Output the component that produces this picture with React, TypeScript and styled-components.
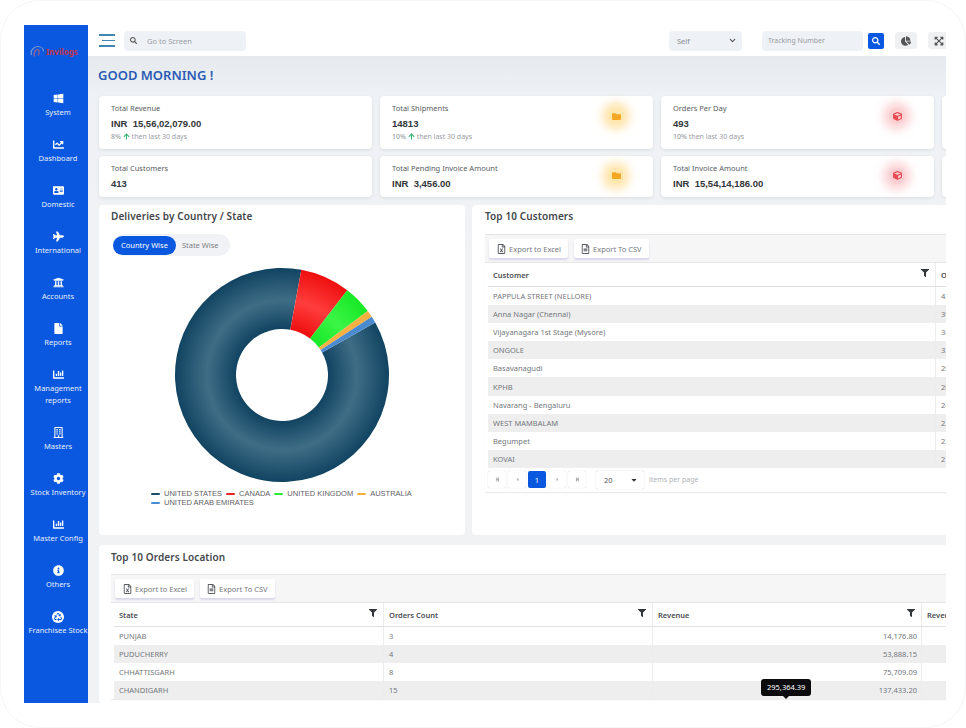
import React from 'react';
import styled, { createGlobalStyle } from 'styled-components';
import {
  FaWindows, FaChartLine, FaAddressCard, FaPlane, FaUniversity, FaFile, FaChartBar,
  FaRegBuilding, FaCog, FaInfoCircle, FaRecycle, FaSearch, FaChartPie, FaFilter,
  FaRegFileExcel, FaRegFileAlt, FaArrowUp, FaCube, FaFolder, FaExpandArrowsAlt,
  FaStepBackward, FaStepForward, FaCaretLeft, FaCaretRight, FaCaretDown,
} from 'react-icons/fa';
import { FiChevronDown } from 'react-icons/fi';

const GlobalStyle = createGlobalStyle`
  html, body {
    margin: 0;
    padding: 0;
    background: #ffffff;
  }
  * {
    box-sizing: border-box;
  }
  body {
    font-family: 'Noto Sans', Arial, sans-serif;
  }
`;

const navItems = [
  { icon: <FaWindows />, label: ['System'] },
  { icon: <FaChartLine />, label: ['Dashboard'] },
  { icon: <FaAddressCard />, label: ['Domestic'] },
  { icon: <FaPlane />, label: ['International'] },
  { icon: <FaUniversity />, label: ['Accounts'] },
  { icon: <FaFile />, label: ['Reports'] },
  { icon: <FaChartBar />, label: ['Management', 'reports'] },
  { icon: <FaRegBuilding />, label: ['Masters'] },
  { icon: <FaCog />, label: ['Stock Inventory'] },
  { icon: <FaChartBar />, label: ['Master Config'] },
  { icon: <FaInfoCircle />, label: ['Others'] },
  { icon: <RecycleIcon />, label: ['Franchisee Stock'] },
];

const customers = [
  ['PAPPULA STREET (NELLORE)', '42'],
  ['Anna Nagar (Chennai)', '39'],
  ['Vijayanagara 1st Stage (Mysore)', '34'],
  ['ONGOLE', '33'],
  ['Basavanagudi', '29'],
  ['KPHB', '26'],
  ['Navarang - Bengaluru', '24'],
  ['WEST MAMBALAM', '23'],
  ['Begumpet', '23'],
  ['KOVAI', '21'],
];

const locations = [
  ['PUNJAB', '3', '14,176.80'],
  ['PUDUCHERRY', '4', '53,888.15'],
  ['CHHATTISGARH', '8', '75,709.09'],
  ['CHANDIGARH', '15', '137,433.20'],
];

const legend = [
  { color: '#1d4e68', name: 'UNITED STATES' },
  { color: '#ee2222', name: 'CANADA' },
  { color: '#2ee83a', name: 'UNITED KINGDOM' },
  { color: '#f5b042', name: 'AUSTRALIA' },
  { color: '#4a8bd0', name: 'UNITED ARAB EMIRATES' },
];

const CX = 120;
const CY = 110;
const R1 = 107;
const R0 = 46;

function slicePath(from: number, to: number) {
  const point = (r: number, deg: number) => {
    const a = (deg * Math.PI) / 180;
    return `${(CX + r * Math.sin(a)).toFixed(2)} ${(CY - r * Math.cos(a)).toFixed(2)}`;
  };
  const large = to - from > 180 ? 1 : 0;
  return `M${point(R1, from)} A${R1} ${R1} 0 ${large} 1 ${point(R1, to)} L${point(R0, to)} A${R0} ${R0} 0 ${large} 0 ${point(R0, from)} Z`;
}

const slices = [
  { from: 60.6, to: 370.4, fill: 'url(#gradUs)' },
  { from: 10.4, to: 37.6, fill: 'url(#gradCa)' },
  { from: 37.6, to: 53.3, fill: 'url(#gradUk)' },
  { from: 53.3, to: 57, fill: '#f5b042' },
  { from: 57, to: 60.6, fill: '#4a8bd0' },
];

function ringGradient(id: string, edge: string, mid: string) {
  return (
    <radialGradient id={id} gradientUnits="userSpaceOnUse" cx={CX} cy={CY} r={R1}>
      <stop offset="0.43" stopColor={edge} />
      <stop offset="0.7" stopColor={mid} />
      <stop offset="1" stopColor={edge} />
    </radialGradient>
  );
}

const Donut = () => (
  <svg width="240" height="220" viewBox="0 0 240 220">
    <defs>
      {ringGradient('gradUs', '#114461', '#3f6d86')}
      {ringGradient('gradCa', '#ee0f0f', '#ff3d3d')}
      {ringGradient('gradUk', '#17e826', '#3bf546')}
    </defs>
    {slices.map((s, i) => (
      <path key={i} d={slicePath(s.from, s.to)} fill={s.fill} />
    ))}
  </svg>
);

const Logo = () => (
  <LogoWrap>
    <svg width="15" height="13" viewBox="0 0 15 13" fill="none" stroke="#7f97c8" strokeWidth="1.2">
      <path d="M1.5 10C0 5 4 1.5 8 1.5c3 0 5.5 2 5.5 5" />
      <path d="M4.5 11.5c-1-4 1-7 3-7 2 0 2 3 .8 6" stroke="#a8617f" />
    </svg>
    <LogoText>Invilogs</LogoText>
  </LogoWrap>
);

function RecycleIcon() {
  return (
    <RecycleBadge>
      <FaRecycle />
    </RecycleBadge>
  );
}

const Exports = () => (
  <Toolbar>
    <ExportButton $pad="8px">
      <FaRegFileExcel />
      Export to Excel
    </ExportButton>
    <ExportButton $pad="7px">
      <FaRegFileAlt />
      Export To CSV
    </ExportButton>
  </Toolbar>
);

const App: React.FC = () => {
  return (
    <Screen>
      <GlobalStyle />
      <Frame>
        <Sidebar>
          <Logo />
          <Nav>
            {navItems.map((item, i) => (
              <NavItem key={i}>
                <NavIcon>{item.icon}</NavIcon>
                {item.label.map((line) => (
                  <NavLabel key={line}>{line}</NavLabel>
                ))}
              </NavItem>
            ))}
          </Nav>
        </Sidebar>

        <Content>
          <TopBar>
            <Burger>
              <span />
              <span />
              <span />
            </Burger>
            <SearchBox>
              <FaSearch size={7} color="#555" />
              <span>Go to Screen</span>
            </SearchBox>
            <TopRight>
              <SelectBox>
                <span>Self</span>
                <FiChevronDown size={9} color="#555" strokeWidth={3} />
              </SelectBox>
              <TrackingBox>Tracking Number</TrackingBox>
              <BlueButton>
                <FaSearch size={8} color="#fff" />
              </BlueButton>
              <GreyButton>
                <FaChartPie size={10} color="#555" />
              </GreyButton>
              <GreyButton>
                <FaExpandArrowsAlt size={10} color="#555" />
              </GreyButton>
            </TopRight>
          </TopBar>

          <Main>
            <Greeting>GOOD MORNING !</Greeting>
            <CardGrid>
              <StatCard>
                <div>
                  <StatLabel>Total Revenue</StatLabel>
                  <StatValue>INR&nbsp; 15,56,02,079.00</StatValue>
                  <StatNote>
                    <b>8%</b> <FaArrowUp size={7} color="#2fb36f" /> then last 30 days
                  </StatNote>
                </div>
              </StatCard>
              <StatCard>
                <div>
                  <StatLabel>Total Shipments</StatLabel>
                  <StatValue>14813</StatValue>
                  <StatNote>
                    <b>10%</b> <FaArrowUp size={7} color="#2fb36f" /> then last 30 days
                  </StatNote>
                </div>
                <Glow $tone="orange" $raised>
                  <FaFolder />
                </Glow>
              </StatCard>
              <StatCard>
                <div>
                  <StatLabel>Orders Per Day</StatLabel>
                  <StatValue>493</StatValue>
                  <StatNote>
                    <b>10%</b> then last 30 days
                  </StatNote>
                </div>
                <Glow $tone="red" $raised>
                  <FaCube />
                </Glow>
              </StatCard>
              <StatCard />
              <StatCard $short>
                <div>
                  <StatLabel>Total Customers</StatLabel>
                  <StatValue>413</StatValue>
                </div>
              </StatCard>
              <StatCard $short>
                <div>
                  <StatLabel>Total Pending Invoice Amount</StatLabel>
                  <StatValue>INR&nbsp; 3,456.00</StatValue>
                </div>
                <Glow $tone="orange">
                  <FaFolder />
                </Glow>
              </StatCard>
              <StatCard $short>
                <div>
                  <StatLabel>Total Invoice Amount</StatLabel>
                  <StatValue>INR&nbsp; 15,54,14,186.00</StatValue>
                </div>
                <Glow $tone="red">
                  <FaCube />
                </Glow>
              </StatCard>
              <StatCard $short />
            </CardGrid>

            <PanelRow>
              <ChartPanel>
                <PanelTitle>Deliveries by Country / State</PanelTitle>
                <Toggle>
                  <ToggleOption $active>Country Wise</ToggleOption>
                  <ToggleOption>State Wise</ToggleOption>
                </Toggle>
                <ChartArea>
                  <Donut />
                </ChartArea>
                <Legend>
                  {legend.map((l) => (
                    <LegendItem key={l.name}>
                      <LegendDash $color={l.color} />
                      {l.name}
                    </LegendItem>
                  ))}
                </Legend>
              </ChartPanel>

              <TablePanel>
                <PanelTitle>Top 10 Customers</PanelTitle>
                <GridBox>
                  <Exports />
                  <HeaderRow $cols="448px 60px">
                    <HeaderCell>
                      Customer
                      <FilterIcon />
                    </HeaderCell>
                    <HeaderCell>Orders</HeaderCell>
                  </HeaderRow>
                  {customers.map((row, i) => (
                    <DataRow key={row[0]} $cols="448px 60px" $alt={i % 2 === 1}>
                      <DataCell>{row[0]}</DataCell>
                      <DataCell>{row[1]}</DataCell>
                    </DataRow>
                  ))}
                  <Pager>
                    <PageButton><FaStepBackward /></PageButton>
                    <PageButton><FaCaretLeft /></PageButton>
                    <PageButton $active>1</PageButton>
                    <PageButton><FaCaretRight /></PageButton>
                    <PageButton><FaStepForward /></PageButton>
                    <PageSize>
                      20
                      <FaCaretDown size={8} color="#333" />
                    </PageSize>
                    <PageNote>items per page</PageNote>
                  </Pager>
                </GridBox>
              </TablePanel>
            </PanelRow>

            <BottomPanel>
              <PanelTitle>Top 10 Orders Location</PanelTitle>
              <GridBox $tight>
                <Exports />
                <HeaderRow $cols="270px 269px 269px 60px">
                  <HeaderCell>
                    State
                    <FilterIcon />
                  </HeaderCell>
                  <HeaderCell>
                    Orders Count
                    <FilterIcon />
                  </HeaderCell>
                  <HeaderCell>
                    Revenue
                    <FilterIcon />
                  </HeaderCell>
                  <HeaderCell>Revenue</HeaderCell>
                </HeaderRow>
                {locations.map((row, i) => (
                  <DataRow key={row[0]} $cols="270px 269px 269px 60px" $alt={i % 2 === 1}>
                    <DataCell>{row[0]}</DataCell>
                    <DataCell>{row[1]}</DataCell>
                    <DataCell $right>{row[2]}</DataCell>
                    <DataCell />
                  </DataRow>
                ))}
              </GridBox>
              <ValueTip>295,364.39</ValueTip>
            </BottomPanel>
          </Main>
        </Content>
      </Frame>
    </Screen>
  );
};

export default App;

const Screen = styled.div`
  width: 966px;
  height: 728px;
  padding: 24px 19px 24px 23px;
  border: 1px solid #f4f5f7;
  border-radius: 40px;
  background: #ffffff;
  overflow: hidden;
`;

const Frame = styled.div`
  display: flex;
  height: 678px;
  overflow: hidden;
`;

const Sidebar = styled.aside`
  flex: 0 0 64px;
  background: #0a58e0;
  overflow: hidden;
`;

const LogoWrap = styled.div`
  display: flex;
  align-items: center;
  gap: 1px;
  height: 18px;
  margin-top: 17px;
  padding-left: 6px;
`;

const LogoText = styled.span`
  font-size: 8px;
  font-weight: 700;
  color: #c8334a;
`;

const Nav = styled.nav`
  display: flex;
  flex-direction: column;
  gap: 20px;
  margin-top: 32px;
  padding-left: 4px;
`;

const NavItem = styled.div`
  display: flex;
  flex-direction: column;
  align-items: center;
  color: #ffffff;
`;

const NavIcon = styled.div`
  display: flex;
  align-items: center;
  justify-content: center;
  height: 13px;
  margin-bottom: 1px;
  font-size: 11px;
`;

const RecycleBadge = styled.span`
  display: flex;
  align-items: center;
  justify-content: center;
  width: 12px;
  height: 12px;
  border-radius: 50%;
  background: #ffffff;
  font-size: 8px;
  color: #0a58e0;
`;

const NavLabel = styled.div`
  font-size: 7.5px;
  line-height: 12px;
  white-space: nowrap;
  color: #e6eefc;
`;

const Content = styled.div`
  flex: 1;
  min-width: 0;
  display: flex;
  flex-direction: column;
`;

const TopBar = styled.header`
  display: flex;
  align-items: center;
  height: 31px;
  padding-left: 11px;
  background: #ffffff;
`;

const Burger = styled.div`
  display: flex;
  flex-direction: column;
  align-items: flex-end;
  gap: 4px;
  width: 16px;

  span {
    display: block;
    height: 1.5px;
    width: 16px;
    background: #3f86b0;
  }
  span:nth-child(2) {
    width: 13px;
  }
`;

const SearchBox = styled.div`
  display: flex;
  align-items: center;
  gap: 10px;
  width: 122px;
  height: 20px;
  margin-left: 9px;
  padding-left: 6px;
  border-radius: 4px;
  background: #eef1f6;
  font-size: 7.5px;
  color: #9a9da3;
`;

const TopRight = styled.div`
  display: flex;
  align-items: center;
  margin-left: auto;
  margin-right: -4px;
`;

const SelectBox = styled.div`
  display: flex;
  align-items: center;
  justify-content: space-between;
  width: 73px;
  height: 20px;
  padding: 0 5px 0 8px;
  border-radius: 4px;
  background: #eef1f6;
  font-size: 7.5px;
  color: #8a8d93;
`;

const TrackingBox = styled.div`
  display: flex;
  align-items: center;
  width: 101px;
  height: 20px;
  margin-left: 20px;
  padding-left: 6px;
  border-radius: 4px;
  background: #eef1f6;
  font-size: 7px;
  color: #9a9da3;
`;

const BlueButton = styled.div`
  display: flex;
  align-items: center;
  justify-content: center;
  width: 16px;
  height: 16px;
  margin-left: 5px;
  border-radius: 2px;
  background: #0a58e0;
`;

const GreyButton = styled.div`
  display: flex;
  align-items: center;
  justify-content: center;
  width: 22px;
  height: 17px;
  margin-left: 11px;
  border-radius: 3px;
  background: #eff0f2;
`;

const Main = styled.main`
  flex: 1;
  min-height: 0;
  padding-left: 11px;
  background: linear-gradient(to bottom, #e6e9ee 0, #eef1f5 40px, #f1f2f4 200px);
  overflow: hidden;
`;

const Greeting = styled.h1`
  height: 40px;
  margin: 0 0 0 -1px;
  font-size: 13px;
  font-weight: 600;
  line-height: 38px;
  color: #2a5cb4;
`;

const CardGrid = styled.div`
  display: grid;
  grid-template-columns: repeat(4, 273px);
  column-gap: 8px;
  row-gap: 7px;
`;

const StatCard = styled.div<{ $short?: boolean }>`
  display: flex;
  align-items: center;
  justify-content: space-between;
  height: ${(p) => (p.$short ? '41px' : '53px')};
  padding: 0 29px ${(p) => (p.$short ? '2px' : '0')} 12px;
  border-radius: 4px;
  background: #ffffff;
  box-shadow: 0 1px 3px rgba(60, 70, 90, 0.12);
`;

const StatLabel = styled.div`
  font-size: 7.5px;
  line-height: 11px;
  color: #5a5d62;
`;

const StatValue = styled.div`
  margin-top: 4px;
  font-family: 'Liberation Sans', Arial, sans-serif;
  font-size: 9.5px;
  font-weight: 700;
  line-height: 11px;
  color: #33363a;
`;

const StatNote = styled.div`
  margin-top: 3px;
  font-size: 7px;
  line-height: 10px;
  color: #9a9da3;

  b {
    font-weight: 500;
  }
  svg {
    vertical-align: -0.5px;
  }
`;

const Glow = styled.div<{ $tone: 'orange' | 'red'; $raised?: boolean }>`
  display: flex;
  align-items: center;
  justify-content: center;
  width: 16px;
  height: 16px;
  margin-bottom: ${(p) => (p.$raised ? '13px' : '0')};
  border-radius: 50%;
  font-size: 9px;
  color: ${(p) => (p.$tone === 'orange' ? '#f5a623' : '#ea4b55')};
  background: ${(p) => (p.$tone === 'orange' ? '#ffe7b0' : '#fcd0d2')};
  box-shadow: 0 0 8px 6px ${(p) => (p.$tone === 'orange' ? 'rgba(255, 214, 130, 0.6)' : 'rgba(248, 170, 175, 0.5)')};
`;

const PanelRow = styled.div`
  display: flex;
  gap: 7px;
  margin-top: 8px;
  width: 900px;
`;

const Panel = styled.section`
  position: relative;
  padding: 5px 12px 0;
  border-radius: 4px;
  background: #ffffff;
`;

const ChartPanel = styled(Panel)`
  flex: 0 0 366px;
  height: 330px;
`;

const TablePanel = styled(Panel)`
  flex: 1;
  height: 330px;
  padding-left: 13px;
`;

const BottomPanel = styled(Panel)`
  width: 900px;
  height: 158px;
  margin-top: 10px;
  padding-top: 6px;
`;

const PanelTitle = styled.h2`
  margin: 0;
  font-size: 10px;
  font-weight: 600;
  line-height: 12px;
  letter-spacing: 0.1px;
  color: #44474c;
`;

const Toggle = styled.div`
  display: inline-flex;
  align-items: center;
  height: 22px;
  margin-top: 12px;
  margin-left: 2px;
  border-radius: 11px;
  background: #f1f2f5;
`;

const ToggleOption = styled.div<{ $active?: boolean }>`
  display: flex;
  align-items: center;
  height: 19px;
  padding: 0 ${(p) => (p.$active ? '8px' : '11px 0 6px')};
  border-radius: 10px;
  font-size: 7.5px;
  color: ${(p) => (p.$active ? '#ffffff' : '#7d8086')};
  background: ${(p) => (p.$active ? '#0a58e0' : 'transparent')};
`;

const ChartArea = styled.div`
  display: flex;
  margin-top: 9px;
  margin-left: 51px;
`;

const Legend = styled.div`
  display: flex;
  flex-wrap: wrap;
  width: 275px;
  margin-left: 40px;
  margin-top: 4px;
  column-gap: 4px;
  font-family: 'Liberation Sans', Arial, sans-serif;
  font-size: 7.5px;
  line-height: 9px;
  color: #5f6266;
`;

const LegendItem = styled.div`
  display: flex;
  align-items: center;
  gap: 4px;
  white-space: nowrap;
`;

const LegendDash = styled.i<{ $color: string }>`
  display: block;
  width: 9px;
  height: 2px;
  border-radius: 1px;
  background: ${(p) => p.$color};
`;

const GridBox = styled.div<{ $tight?: boolean }>`
  width: 900px;
  margin-top: ${(p) => (p.$tight ? '11px' : '12px')};
  background: #ffffff;
  border-top: 1px solid #e4e5e7;
  box-shadow: 0 1px 1px rgba(0, 0, 0, 0.08);
`;

const Toolbar = styled.div`
  display: flex;
  align-items: center;
  gap: 6px;
  height: 28px;
  padding-left: 4px;
  background: #f6f6f7;
  border-bottom: 1px solid #e6e6e8;
`;

const ExportButton = styled.div<{ $pad: string }>`
  display: flex;
  align-items: center;
  gap: 3px;
  height: 19px;
  padding: 0 7px 0 ${(p) => p.$pad};
  border-radius: 2px;
  background: #ffffff;
  box-shadow: 0 2px 2px rgba(90, 90, 180, 0.2);
  font-size: 7.5px;
  color: #75787d;

  svg {
    width: 9px;
    height: 10px;
    color: #5a5d62;
  }
`;

const HeaderRow = styled.div<{ $cols: string }>`
  display: grid;
  grid-template-columns: ${(p) => p.$cols};
  height: 24px;
  margin-left: 3px;
  border-bottom: 1px solid #dfe0e2;
`;

const HeaderCell = styled.div`
  position: relative;
  display: flex;
  align-items: center;
  padding-left: 5px;
  border-right: 1px solid #ececee;
  font-size: 7.5px;
  font-weight: 600;
  color: #4a4d52;
  white-space: nowrap;
`;

const FilterIcon = styled(FaFilter)`
  position: absolute;
  top: 6px;
  right: 6px;
  width: 8px;
  height: 8px;
  color: #33363a;
`;

const DataRow = styled.div<{ $cols: string; $alt: boolean }>`
  display: grid;
  grid-template-columns: ${(p) => p.$cols};
  height: 18.1px;
  margin-left: 3px;
  background: ${(p) => (p.$alt ? '#eeeeee' : '#ffffff')};
`;

const DataCell = styled.div<{ $right?: boolean }>`
  display: flex;
  align-items: center;
  justify-content: ${(p) => (p.$right ? 'flex-end' : 'flex-start')};
  padding: 0 4px 0 5px;
  border-right: 1px solid #ececee;
  font-size: 7.5px;
  color: #74777c;
  white-space: nowrap;
`;

const Pager = styled.div`
  display: flex;
  align-items: center;
  gap: 2px;
  height: 24px;
  padding-left: 3px;
  background: #ffffff;
`;

const PageButton = styled.div<{ $active?: boolean }>`
  display: flex;
  align-items: center;
  justify-content: center;
  width: 18px;
  height: 17px;
  border-radius: 2px;
  font-size: ${(p) => (p.$active ? '7.5px' : '5px')};
  color: ${(p) => (p.$active ? '#ffffff' : '#a8abb0')};
  background: ${(p) => (p.$active ? '#0a58e0' : '#ffffff')};
  box-shadow: ${(p) => (p.$active ? 'none' : '0 0 1px rgba(0, 0, 0, 0.25)')};
`;

const PageSize = styled.div`
  display: flex;
  align-items: center;
  justify-content: space-between;
  width: 48px;
  height: 18px;
  margin-left: 8px;
  padding: 0 6px 0 8px;
  border-radius: 2px;
  box-shadow: 0 0 1px rgba(0, 0, 0, 0.3);
  font-size: 7.5px;
  color: #55585d;
`;

const PageNote = styled.div`
  margin-left: 3px;
  font-size: 7px;
  color: #b0b3b8;
`;

const ValueTip = styled.div`
  position: absolute;
  left: 662px;
  top: 134px;
  padding: 0 6px;
  height: 17px;
  border-radius: 3px;
  background: #0b0b0d;
  font-size: 7.5px;
  line-height: 16px;
  color: #ffffff;

  &::after {
    content: '';
    position: absolute;
    left: 22px;
    bottom: -3px;
    border-left: 3px solid transparent;
    border-right: 3px solid transparent;
    border-top: 3px solid #0b0b0d;
  }
`;
